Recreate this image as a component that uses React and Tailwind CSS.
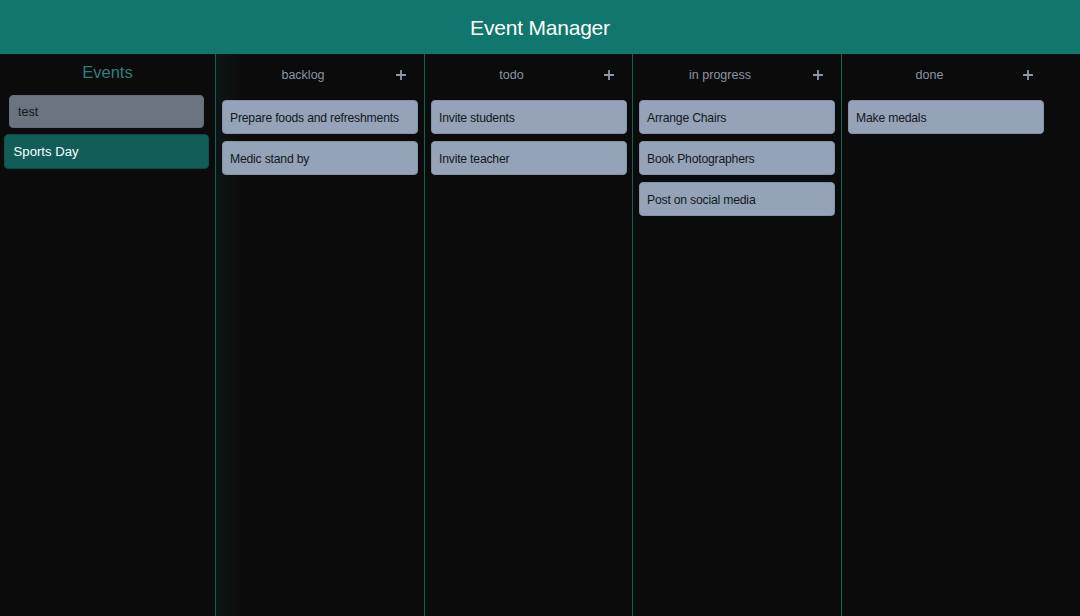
import React from "react";

const events = [
  { id: 1, name: "test" },
  { id: 2, name: "Sports Day" },
];

const columns = [
  { key: "backlog", title: "backlog", width: "w-[209px]", tasks: ["Prepare foods and refreshments", "Medic stand by"] },
  { key: "todo", title: "todo", width: "w-[208px]", tasks: ["Invite students", "Invite teacher"] },
  { key: "progress", title: "in progress", width: "w-[209px]", tasks: ["Arrange Chairs", "Book Photographers", "Post on social media"] },
  { key: "done", title: "done", width: "w-[209px]", tasks: ["Make medals"] },
];

function PlusIcon() {
  return (
    <svg width="10" height="10" viewBox="0 0 10 10" className="text-[#8f99a8]">
      <path d="M5 0.5v9M0.5 5h9" stroke="currentColor" strokeWidth="1.8" strokeLinecap="round" />
    </svg>
  );
}

function Column({ col, index }) {
  const glow =
    index === 0
      ? "bg-[linear-gradient(to_right,rgba(45,160,150,0.07),rgba(45,160,150,0.03)_16px,transparent_24px)]"
      : "";
  return (
    <section className={`${col.width} shrink-0 flex flex-col ${index < 3 ? "border-r border-[#175e58]" : ""} ${glow}`}>
      <header className="flex items-center h-[40px] pt-[2px] px-[6px]">
        <span className="flex-1 text-center text-[12.5px] text-[#8a94a3]">{col.title}</span>
        <button className="w-[34px] h-[24px] flex items-center justify-center">
          <PlusIcon />
        </button>
      </header>
      <div className="flex flex-col gap-[7px] px-[6px] pt-[6px]">
        {col.tasks.map((t) => (
          <div
            key={t}
            className="h-[34px] w-[196px] flex items-center pl-[7px] pt-[2px] rounded-[4px] bg-[#94a3b8] border border-[#8493a8] text-[12.2px] tracking-[-0.2px] text-[#13181f] whitespace-nowrap"
          >
            {t}
          </div>
        ))}
      </div>
    </section>
  );
}

export default function App() {
  return (
    <div className="h-[616px] w-[1080px] flex flex-col bg-[#0b0b0b] overflow-hidden font-['Liberation_Sans',Arial,sans-serif]">
      <header className="h-[54px] shrink-0 pt-[2px] bg-[#10766e] flex items-center justify-center">
        <h1 className="text-[21px] tracking-[-0.2px] text-white">Event Manager</h1>
      </header>
      <main className="flex-1 flex">
        <aside className="w-[216px] shrink-0 border-r border-[#175e58] flex flex-col">
          <h2 className="h-[36px] pt-[1px] flex items-center justify-center text-[16.5px] text-[#2a8077]">Events</h2>
          <div className="flex flex-col gap-[7px] pt-[5px] pl-[9px]">
            {events.map((e) => {
              const active = e.name === "Sports Day";
              return (
                <div
                  key={e.id}
                  className={
                    active
                      ? "h-[33px] w-[195px] flex items-center pl-[8px] pt-[2px] rounded-[4px] bg-[#115e59] border border-[#105650] text-[12.5px] text-white scale-105"
                      : "h-[33px] w-[195px] flex items-center pl-[8px] pt-[2px] rounded-[4px] bg-[#6b7280] border border-[#656c79] text-[12.5px] text-[#111418]"
                  }
                >
                  {e.name}
                </div>
              );
            })}
          </div>
        </aside>
        {columns.map((c, i) => (
          <Column key={c.key} col={c} index={i} />
        ))}
      </main>
    </div>
  );
}
